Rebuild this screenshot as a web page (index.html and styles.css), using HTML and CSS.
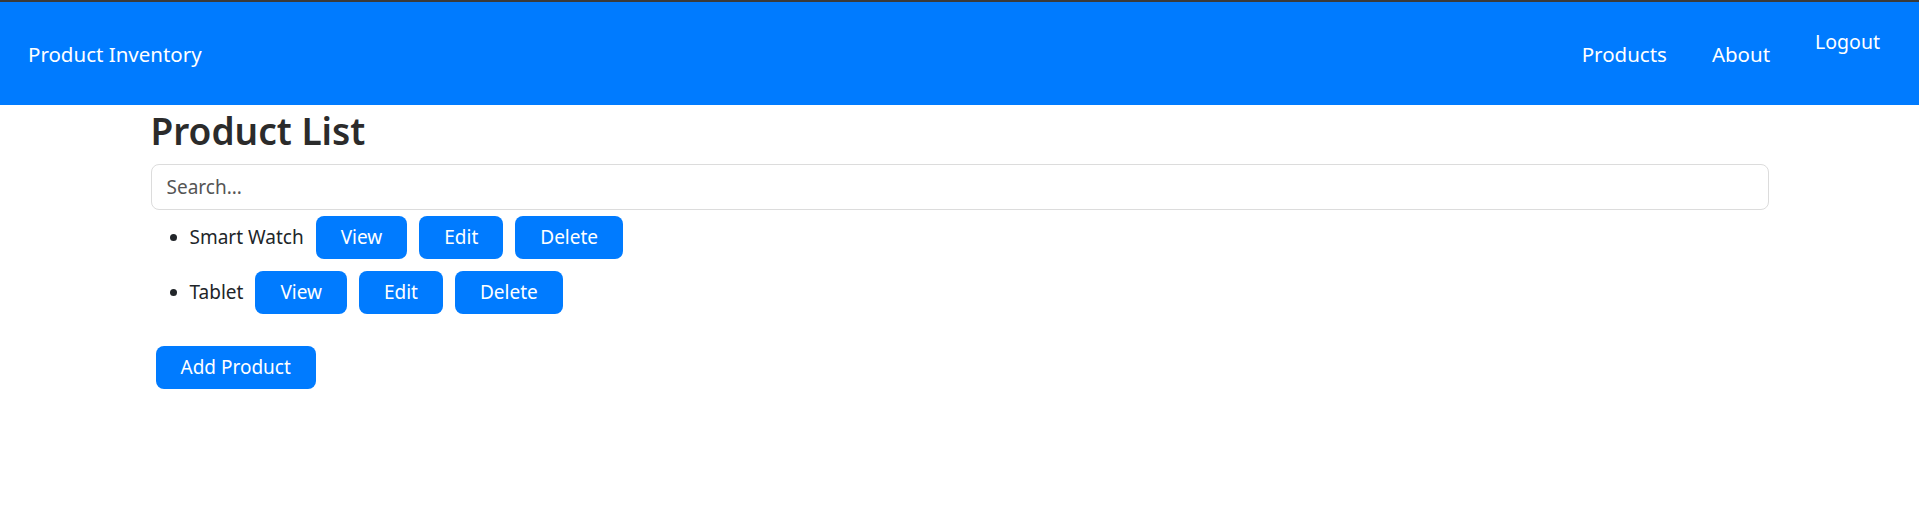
FILE: index.html
```html
<!DOCTYPE html>
<html lang="en">
<head>
<meta charset="utf-8">
<title>Product Inventory</title>
<link rel="stylesheet" href="styles.css">
</head>
<body>
<nav class="navbar">
  <a class="brand" href="#">Product Inventory</a>
  <div class="nav-links">
    <a class="nav-link" href="#">Products</a>
    <a class="nav-link" href="#">About</a>
    <button class="logout">Logout</button>
  </div>
</nav>
<main class="container">
  <h2 class="title">Product List</h2>
  <input class="search" type="text" placeholder="Search...">
  <ul class="product-list">
    <li class="product"><span class="name">Smart Watch</span><button class="btn">View</button><button class="btn">Edit</button><button class="btn">Delete</button></li>
    <li class="product"><span class="name">Tablet</span><button class="btn">View</button><button class="btn">Edit</button><button class="btn">Delete</button></li>
  </ul>
  <button class="btn add">Add Product</button>
</main>
</body>
</html>
```
FILE: styles.css
```css
html, body {
  margin: 0;
  padding: 0;
}
body {
  font-family: "Noto Sans", "Open Sans", sans-serif;
  color: #212529;
  background: #fff;
  border-top: 2px solid #3a3a3a;
}
.navbar {
  height: 103px;
  background: #007bff;
  display: flex;
  align-items: center;
  justify-content: space-between;
  padding: 0 39px 0 28px;
}
.brand {
  color: #fff;
  text-decoration: none;
  font-size: 20.5px;
}
.nav-links {
  display: flex;
  align-items: center;
  height: 100%;
}
.nav-link {
  color: #fff;
  text-decoration: none;
  font-size: 20.5px;
  margin-right: 45px;
}
.logout {
  background: none;
  border: none;
  color: #fff;
  font: inherit;
  font-size: 19.5px;
  padding: 0;
  align-self: flex-start;
  margin-top: 26px;
}
.container {
  width: 1618px;
  margin: 0 auto;
}
.title {
  font-size: 37px;
  font-weight: 600;
  margin: 1px 0 8px;
  line-height: 50px;
  color: #2b2b2b;
}
.search {
  display: block;
  box-sizing: border-box;
  width: 100%;
  height: 46px;
  border: 1px solid #dcdcdc;
  border-radius: 8px;
  padding: 0 15px;
  font-family: inherit;
  font-size: 19px;
  color: #212529;
  outline: none;
}
.search::placeholder {
  color: #555;
}
.product-list {
  margin: 0 0 20px;
  padding-left: 39px;
}
.product {
  font-size: 19px;
  line-height: 43px;
}
.name {
  margin-right: 6px;
}
.btn {
  display: inline-block;
  background: #007bff;
  color: #fff;
  border: none;
  border-radius: 8px;
  font-family: inherit;
  font-size: 19px;
  line-height: 27px;
  padding: 8px 25px;
  margin: 6px;
  vertical-align: baseline;
  cursor: pointer;
}
.add {
  margin: 6px 5px;
}
```
